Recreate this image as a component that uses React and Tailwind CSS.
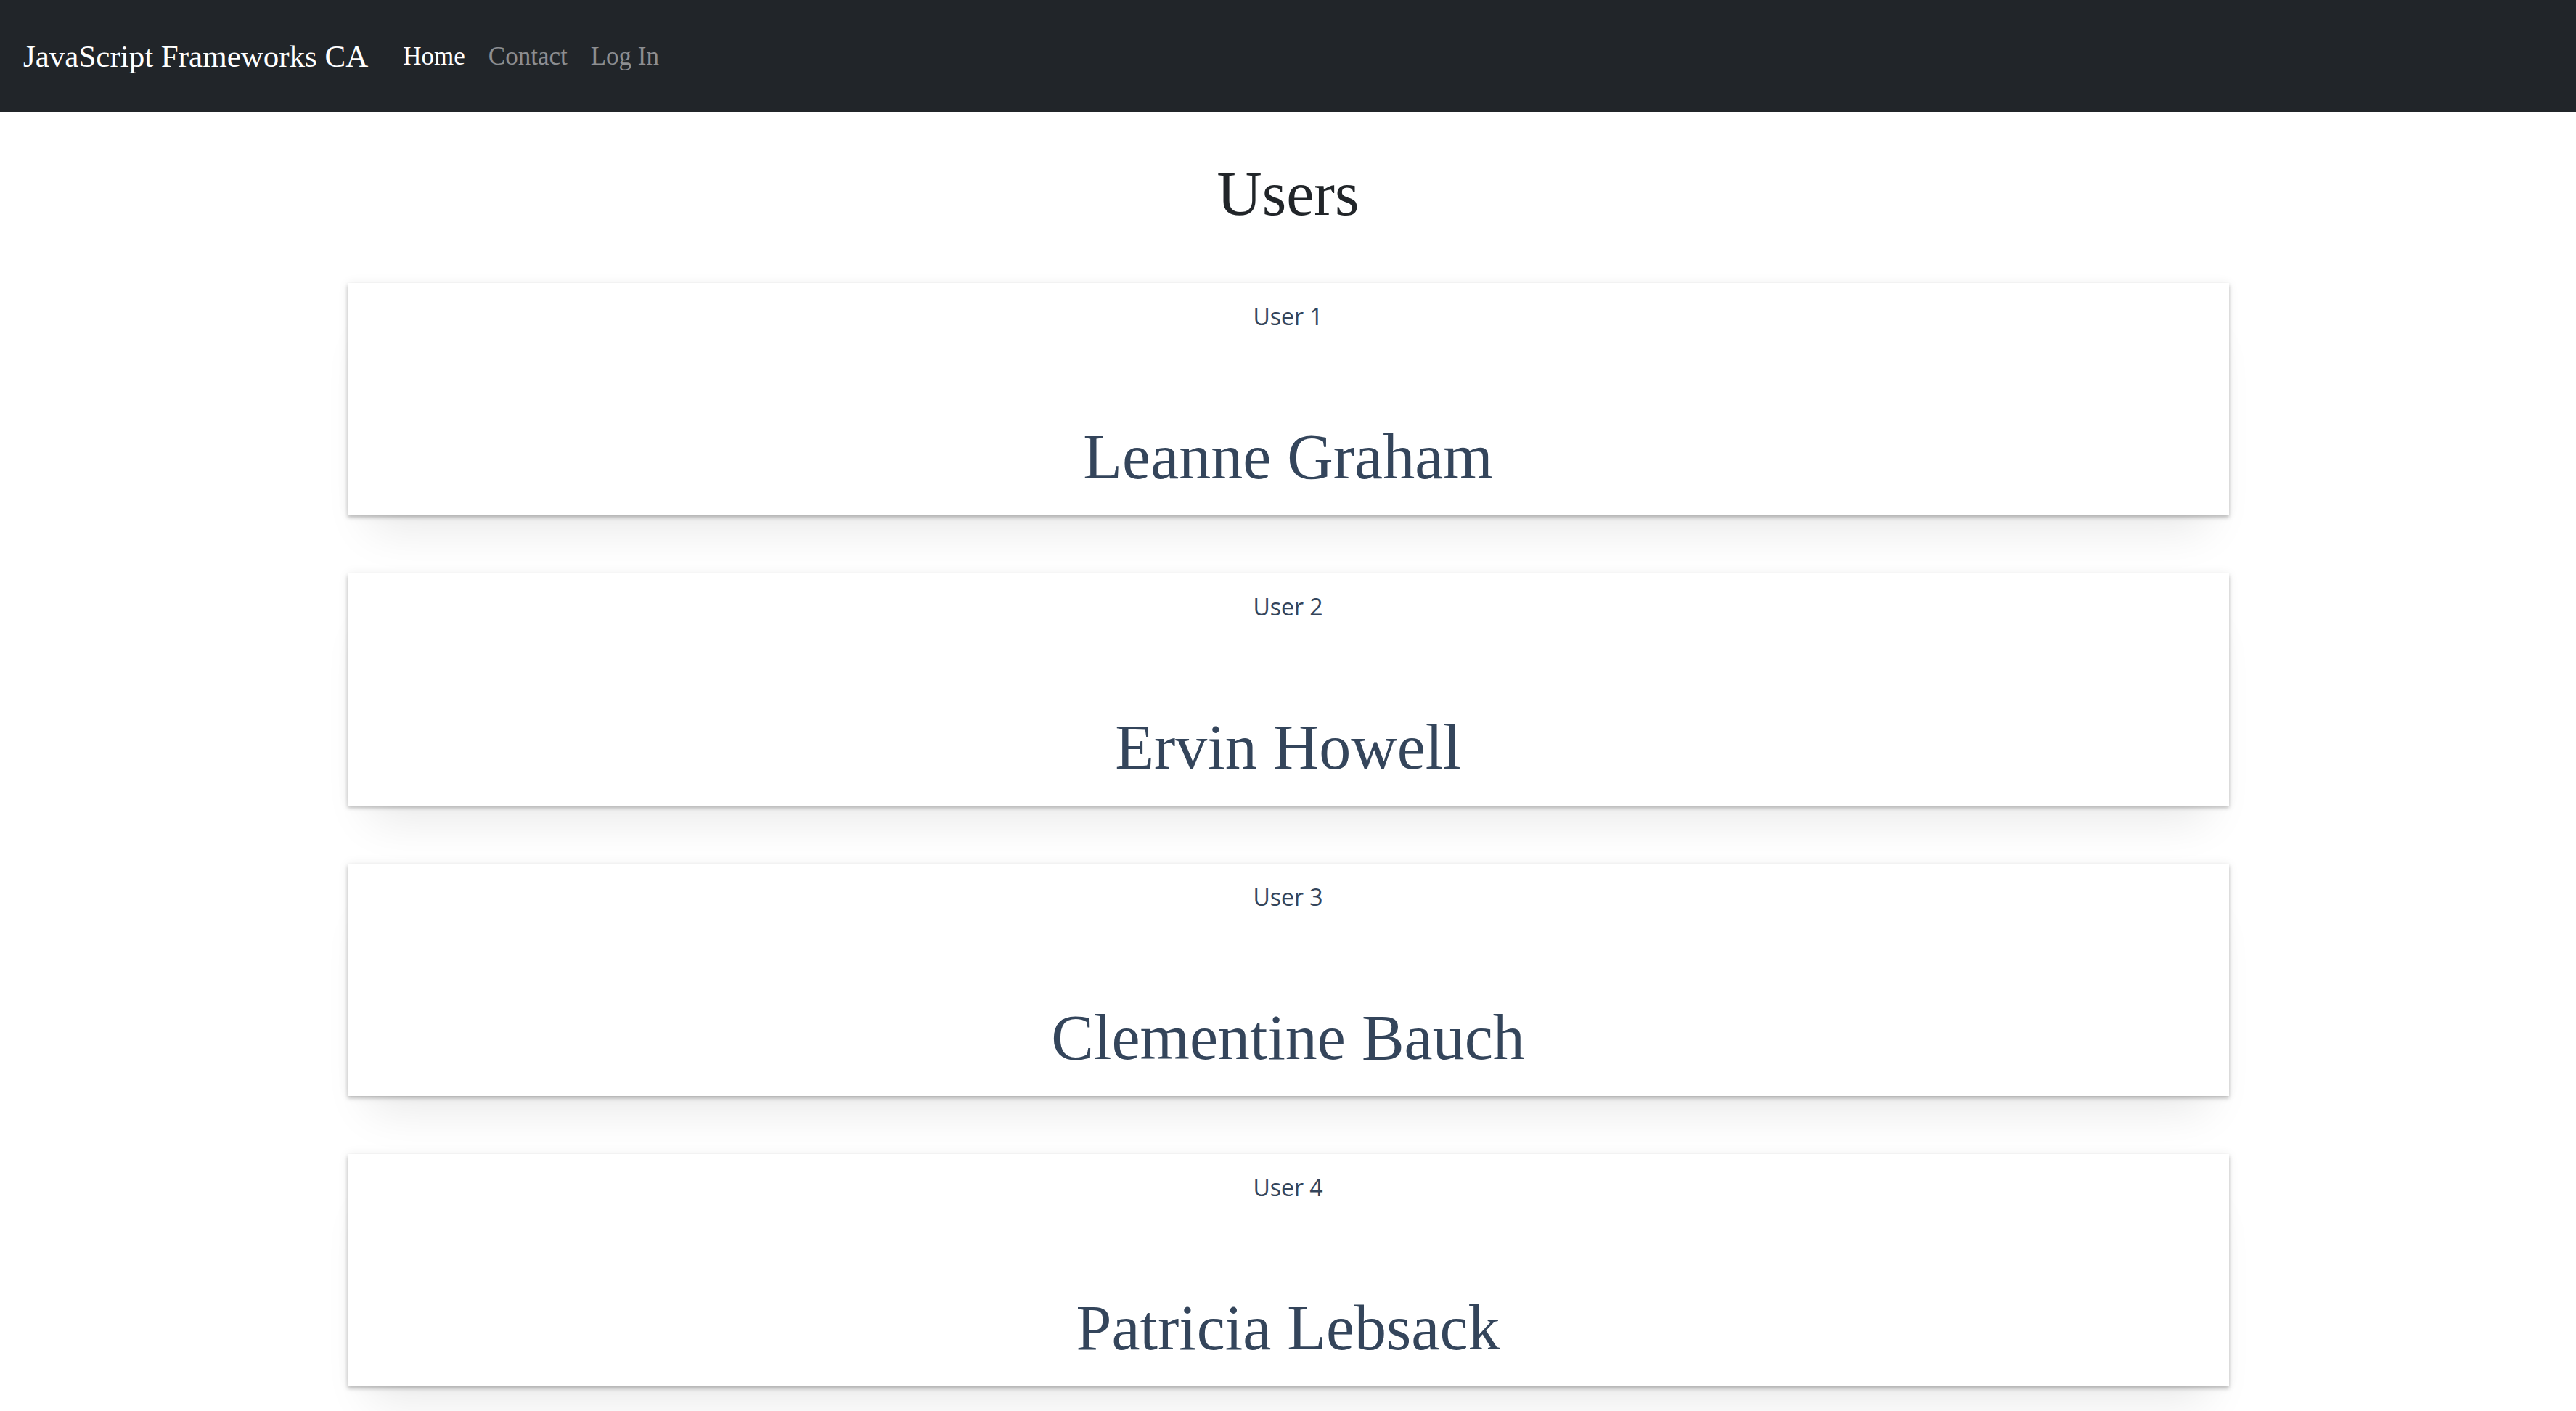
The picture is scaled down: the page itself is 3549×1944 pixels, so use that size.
import React from "react";

const users = [
  { id: 1, name: "Leanne Graham" },
  { id: 2, name: "Ervin Howell" },
  { id: 3, name: "Clementine Bauch" },
  { id: 4, name: "Patricia Lebsack" },
];

const serif = "font-['Liberation_Serif',serif]";

export default function App() {
  return (
    <div className="min-h-screen bg-white">
      <nav className="h-[154px] bg-[#212529] flex items-center px-[32px]">
        <a className={`${serif} text-[43px] text-white mr-[32px] leading-none`}>JavaScript Frameworks CA</a>
        <div className={`${serif} flex items-center text-[35px] leading-none`}>
          <a className="px-[16px] text-white">Home</a>
          <a className="px-[16px] text-[#8c8e91]">Contact</a>
          <a className="px-[16px] text-[#8c8e91]">Log In</a>
        </div>
      </nav>
      <main className="w-[2592px] mx-auto flex flex-col items-center">
        <h1 className={`${serif} text-[86px] leading-none text-[#212529] mt-[70px] mb-[80px]`}>Users</h1>
        <div className="w-full flex flex-col gap-[80px]">
          {users.map((u) => (
            <div
              key={u.id}
              className="h-[320px] bg-white flex flex-col items-center shadow-[0_3px_5px_rgba(0,0,0,0.24),0_0_14px_rgba(0,0,0,0.07),0_50px_60px_-30px_rgba(0,0,0,0.09)]"
            >
              <p className="font-['Open_Sans',sans-serif] text-[32px] leading-none text-[#34455b] mt-[30px]">User {u.id}</p>
              <h2 className={`${serif} text-[88px] leading-none text-[#34455b] mt-auto mb-[36px]`}>{u.name}</h2>
            </div>
          ))}
        </div>
      </main>
    </div>
  );
}
